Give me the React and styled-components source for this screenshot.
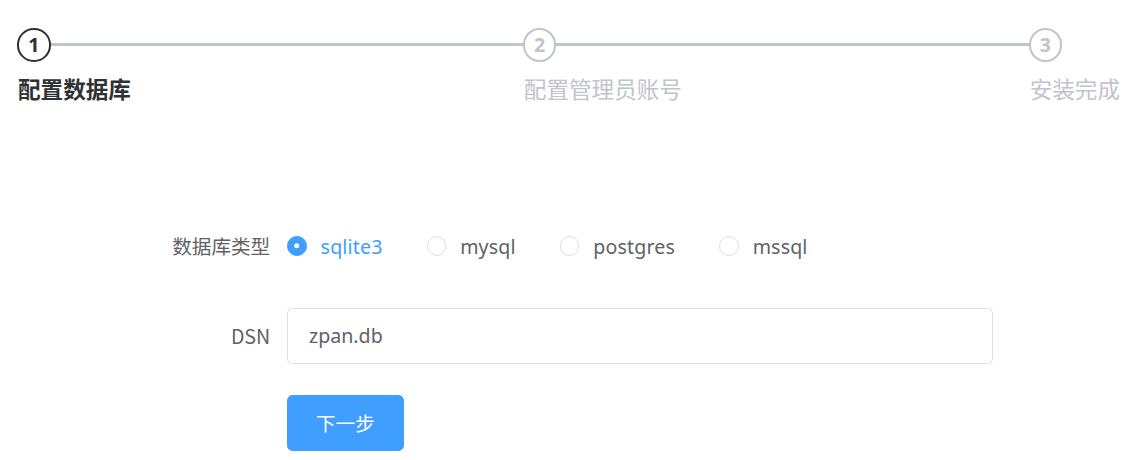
import React, { useState } from "react";
import styled, { createGlobalStyle } from "styled-components";

const GlobalStyle = createGlobalStyle`
  html, body {
    margin: 0;
    padding: 0;
    background: #ffffff;
  }
  body {
    font-family: "Noto Sans", "Noto Sans CJK SC", sans-serif;
    -webkit-font-smoothing: antialiased;
  }
  * { box-sizing: border-box; }
`;

const Page = styled.div`
  padding: 28px 6px 0 17px;
`;

const Steps = styled.div`
  display: flex;
`;

const Step = styled.div`
  flex: ${(p) => (p.$last ? "0 0 auto" : "1 1 0")};
  min-width: 0;
`;

const StepHead = styled.div`
  display: flex;
  align-items: center;
  height: 33.6px;
`;

const StepIcon = styled.div`
  width: 33.6px;
  height: 33.6px;
  flex: none;
  border-radius: 50%;
  border: 2.8px solid ${(p) => (p.$active ? "#303133" : "#c0c4cc")};
  color: ${(p) => (p.$active ? "#303133" : "#c0c4cc")};
  display: flex;
  align-items: center;
  justify-content: center;
  font-size: 19.6px;
  font-weight: 700;
  line-height: 1;
`;

const StepLine = styled.div`
  flex: 1;
  height: 2.8px;
  background: #c0c4cc;
`;

const StepTitle = styled.div`
  font-family: "Noto Sans CJK SC", sans-serif;
  font-size: 22.6px;
  line-height: 53.2px;
  font-weight: ${(p) => (p.$active ? 700 : 400)};
  color: ${(p) => (p.$active ? "#303133" : "#c0c4cc")};
  white-space: nowrap;
  padding-left: 1px;
`;

const Form = styled.form`
  margin: 103px 0 0 130px;
  width: 846px;
`;

const FormItem = styled.div`
  display: flex;
  margin-bottom: ${(p) => p.$spacing}px;
`;

const Label = styled.label`
  width: 140px;
  flex: none;
  padding-right: 16.8px;
  text-align: right;
  font-family: "Noto Sans CJK SC", sans-serif;
  font-size: 19.6px;
  line-height: 56px;
  color: #606266;
`;

const Content = styled.div`
  flex: 1;
  min-height: 56px;
  display: flex;
  align-items: center;
`;

const RadioGroup = styled.div`
  display: flex;
  align-items: center;
`;

const RadioItem = styled.label`
  display: inline-flex;
  align-items: center;
  margin-right: 44px;
  cursor: pointer;
  color: ${(p) => (p.$checked ? "#409eff" : "#606266")};
  &:last-child { margin-right: 0; }
`;

const RadioDot = styled.span`
  position: relative;
  width: 19.6px;
  height: 19.6px;
  border-radius: 50%;
  border: 1.4px solid ${(p) => (p.$checked ? "#409eff" : "#dcdfe6")};
  background: ${(p) => (p.$checked ? "#409eff" : "#ffffff")};
  &::after {
    content: "";
    position: absolute;
    left: 50%;
    top: 50%;
    width: 5.6px;
    height: 5.6px;
    border-radius: 50%;
    background: #ffffff;
    transform: translate(-50%, -50%) scale(${(p) => (p.$checked ? 1 : 0)});
  }
`;

const RadioText = styled.span`
  padding-left: 14px;
  font-size: 19.6px;
  line-height: 1;
  letter-spacing: 0.15px;
  position: relative;
  top: 1px;
`;

const Input = styled.input`
  width: 100%;
  height: 56px;
  border: 1.4px solid #dcdfe6;
  border-radius: 5.6px;
  padding: 0 21px;
  font-family: "Noto Sans", "Noto Sans CJK SC", sans-serif;
  font-size: 19.6px;
  color: #606266;
  outline: none;
  background: #fff;
`;

const Button = styled.button`
  height: 56px;
  padding: 0 28px;
  border: 1.4px solid #409eff;
  background: #409eff;
  color: #fff;
  border-radius: 5.6px;
  font-family: "Noto Sans CJK SC", sans-serif;
  font-size: 19.6px;
  line-height: 1;
  cursor: pointer;
`;

const steps = ["配置数据库", "配置管理员账号", "安装完成"];
const dbTypes = ["sqlite3", "mysql", "postgres", "mssql"];

export default function App() {
  const [db, setDb] = useState("sqlite3");
  return (
    <Page>
      <GlobalStyle />
      <Steps>
        {steps.map((title, i) => {
          const last = i === steps.length - 1;
          const active = i === 0;
          return (
            <Step key={title} $last={last}>
              <StepHead>
                <StepIcon $active={active}>{i + 1}</StepIcon>
                {!last && <StepLine />}
              </StepHead>
              <StepTitle $active={active}>{title}</StepTitle>
            </Step>
          );
        })}
      </Steps>
      <Form onSubmit={(e) => e.preventDefault()}>
        <FormItem $spacing={34}>
          <Label>数据库类型</Label>
          <Content>
            <RadioGroup>
              {dbTypes.map((t) => (
                <RadioItem key={t} $checked={db === t} onClick={() => setDb(t)}>
                  <RadioDot $checked={db === t} />
                  <RadioText>{t}</RadioText>
                </RadioItem>
              ))}
            </RadioGroup>
          </Content>
        </FormItem>
        <FormItem $spacing={31}>
          <Label>DSN</Label>
          <Content>
            <Input defaultValue="zpan.db" />
          </Content>
        </FormItem>
        <FormItem $spacing={0}>
          <Label />
          <Content>
            <Button type="submit">下一步</Button>
          </Content>
        </FormItem>
      </Form>
    </Page>
  );
}
